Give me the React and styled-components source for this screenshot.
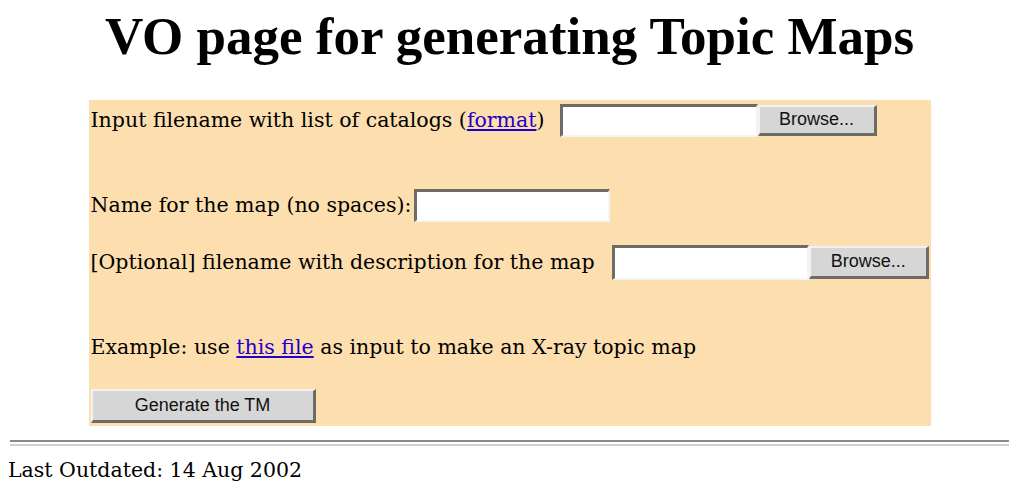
import React from 'react';
import styled, { createGlobalStyle } from 'styled-components';

const GlobalStyle = createGlobalStyle`
  body {
    margin: 8px;
    background: #ffffff;
    color: #000000;
    font-family: "DejaVu Serif", serif;
  }
`;

const Title = styled.h1`
  margin: 2px 0 0;
  text-align: center;
  font-family: "Liberation Serif", serif;
  font-weight: 700;
  font-size: 53px;
  line-height: 52px;
`;

const Panel = styled.form`
  width: 842px;
  margin: 38px auto 0;
  background: #fddeae;
  padding: 2px 0 3px 2px;
  box-sizing: border-box;
  display: flex;
  flex-direction: column;
`;

const Row = styled.div`
  display: flex;
  align-items: center;
  height: ${({ h }) => h || 34}px;
  margin-top: ${({ gap }) => gap || 0}px;
  font-size: 20.5px;
  white-space: nowrap;
`;

const Label = styled.span`
  margin-right: ${({ space }) => space || 8}px;
`;

const Link = styled.a`
  color: #2200cc;
  text-decoration: underline;
`;

const TextBox = styled.div`
  width: ${({ w }) => w || 198}px;
  height: ${({ h }) => h || 33}px;
  box-sizing: border-box;
  background: #ffffff;
  border-top: 3px solid #6e6a66;
  border-left: 3px solid #6e6a66;
  border-bottom: 2px solid #f4f4f4;
  border-right: 2px solid #f4f4f4;
`;

const Button = styled.button`
  width: ${({ w }) => w || 120}px;
  height: ${({ h }) => h || 31}px;
  box-sizing: border-box;
  background: #d6d6d6;
  border-top: 2px solid #f2f2f2;
  border-left: 2px solid #f2f2f2;
  border-bottom: 3px solid #6e6a66;
  border-right: 3px solid #6e6a66;
  font-family: "Liberation Sans", sans-serif;
  font-size: 18px;
  color: #111111;
  padding: 0;
`;

const Rule = styled.hr`
  margin: 14px 2px 0;
  height: 2px;
  border: none;
  border-top: 2px solid #8a8a8a;
  border-bottom: 2px solid #d0d0d0;
`;

const Footer = styled.div`
  margin-top: 12px;
  font-size: 20.5px;
`;

export default function App() {
  return (
    <>
      <GlobalStyle />
      <Title>VO page for generating Topic Maps</Title>
      <Panel>
        <Row h={36}>
          <Label space={15}>
            Input filename with list of catalogs (<Link href="#">format</Link>)
          </Label>
          <TextBox w={198} />
          <Button w={119}>Browse...</Button>
        </Row>
        <Row gap={50}>
          <Label space={3}>Name for the map (no spaces):</Label>
          <TextBox w={196} />
        </Row>
        <Row gap={22} h={36}>
          <Label space={17}>[Optional] filename with description for the map</Label>
          <TextBox w={197} h={35} />
          <Button w={120} h={33}>Browse...</Button>
        </Row>
        <Row gap={50}>
          <Label>
            Example: use <Link href="#">this file</Link> as input to make an X-ray topic map
          </Label>
        </Row>
        <Row gap={25}>
          <Button w={225} h={34}>Generate the TM</Button>
        </Row>
      </Panel>
      <Rule />
      <Footer>Last Outdated: 14 Aug 2002</Footer>
    </>
  );
}
